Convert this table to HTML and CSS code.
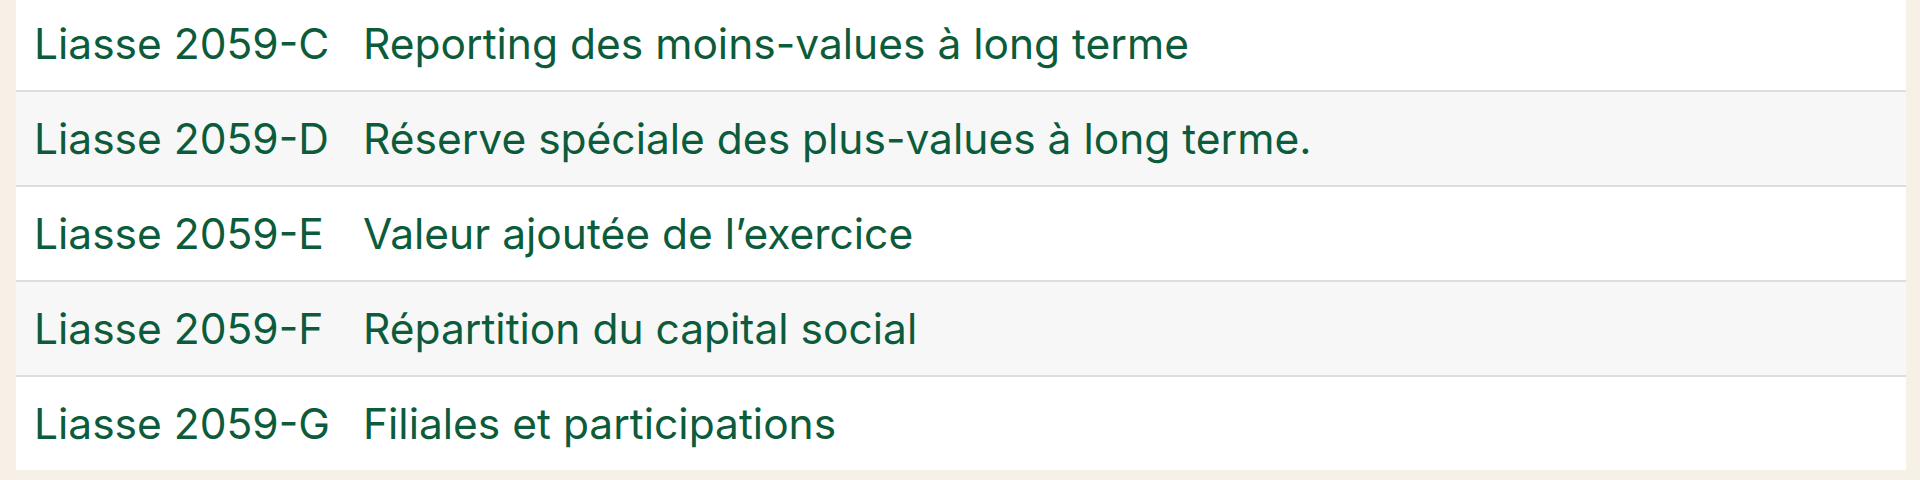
FILE: index.html
```html
<!DOCTYPE html>
<html lang="fr">
<head>
<meta charset="utf-8">
<title>Liasses</title>
<link rel="stylesheet" href="styles.css">
</head>
<body>
<div class="page">
  <div class="card">
    <div class="row"><span class="code">Liasse 2059-C</span><span class="desc">Reporting des moins-values à long terme</span></div>
    <div class="row alt"><span class="code">Liasse 2059-D</span><span class="desc">Réserve spéciale des plus-values à long terme.</span></div>
    <div class="row"><span class="code">Liasse 2059-E</span><span class="desc">Valeur ajoutée de l’exercice</span></div>
    <div class="row alt"><span class="code">Liasse 2059-F</span><span class="desc">Répartition du capital social</span></div>
    <div class="row last"><span class="code">Liasse 2059-G</span><span class="desc">Filiales et participations</span></div>
  </div>
</div>
</body>
</html>
```

FILE: styles.css
```css
html, body {
  margin: 0;
  padding: 0;
  background: #f7f0e7;
}
.page {
  height: 480px;
  overflow: hidden;
  display: flex;
  flex-direction: column;
  justify-content: flex-end;
  padding: 0 14px 10px 16px;
  box-sizing: border-box;
}
.card {
  background: #ffffff;
  display: grid;
  grid-template-columns: auto 1fr;
  font-family: Inter, "Noto Sans", sans-serif;
  font-size: 42.5px;
  color: #0c5c3c;
}
.row {
  display: contents;
}
.row > span {
  height: 93px;
  display: flex;
  align-items: center;
  border-bottom: 2px solid #dcdedd;
  white-space: nowrap;
}
.row.last > span {
  border-bottom: none;
}
.row.alt > span {
  background: #f7f7f7;
}
.code {
  padding: 0 16px 0 18px;
}
.desc {
  padding: 0 17px;
}
```
